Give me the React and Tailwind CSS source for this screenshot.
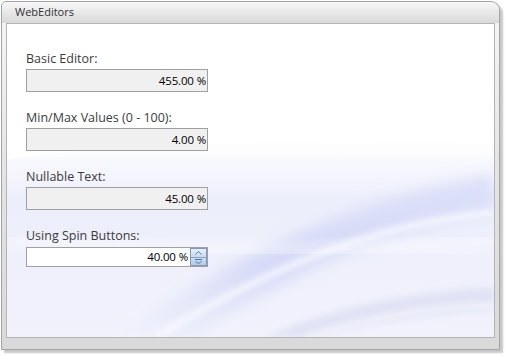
import React from 'react';

const font = { fontFamily: '"Segoe UI", "Open Sans", "Noto Sans", sans-serif' };

const fields = [
  { label: 'Basic Editor:', value: '455.00 %' },
  { label: 'Min/Max Values (0 - 100):', value: '4.00 %' },
  { label: 'Nullable Text:', value: '45.00 %' },
];

// lavender swoosh behind the editors
const Swoosh = () => (
  <svg className="absolute inset-0 w-full h-full" viewBox="0 0 488 312" preserveAspectRatio="none">
    <defs>
      <linearGradient id="tint" x1="0" y1="0" x2="0" y2="1">
        <stop offset="0" stopColor="#eceefb" stopOpacity="0" />
        <stop offset="0.3" stopColor="#eceefb" stopOpacity="1" />
        <stop offset="1" stopColor="#f1f2fc" />
      </linearGradient>
      <linearGradient id="band" x1="0" y1="1" x2="1" y2="0">
        <stop offset="0" stopColor="#dfe2f8" stopOpacity="0" />
        <stop offset="0.4" stopColor="#d6daf7" />
        <stop offset="1" stopColor="#dde0f8" />
      </linearGradient>
      <filter id="soft" x="-20%" y="-20%" width="140%" height="140%">
        <feGaussianBlur stdDeviation="7" />
      </filter>
      <filter id="soft2" x="-20%" y="-20%" width="140%" height="140%">
        <feGaussianBlur stdDeviation="3" />
      </filter>
    </defs>
    <path d="M0 135 C120 118 300 112 488 118 L488 312 L0 312 Z" fill="url(#tint)" />
    <path d="M0 128 C150 122 320 126 488 130" stroke="#ffffff" strokeWidth="8" strokeOpacity="0.8" fill="none" filter="url(#soft)" />
    <path d="M110 312 C220 235 340 175 488 150 L488 190 C370 205 270 255 190 312 Z" fill="url(#band)" filter="url(#soft)" />
    <path d="M150 312 C250 250 360 200 488 188" stroke="#f7f8fe" strokeWidth="6" fill="none" filter="url(#soft2)" />
    <path d="M0 215 C140 225 300 235 488 215" stroke="#ffffff" strokeWidth="10" strokeOpacity="0.55" fill="none" filter="url(#soft)" />
    <path d="M260 312 C330 280 410 268 488 262 L488 285 C420 290 350 300 310 312 Z" fill="#e1e3f5" filter="url(#soft2)" />
    <path d="M300 312 C370 290 430 282 488 280" stroke="#f8f8fd" strokeWidth="4" fill="none" filter="url(#soft2)" />
  </svg>
);

const Field = ({ label, value }) => (
  <div className="flex flex-col">
    <span className="text-[12.5px] leading-[16px] text-[#3b3b3b]">{label}</span>
    <div className="mt-[2px] w-[182px] h-[23px] border border-[#a0a0a0] bg-[#f0f0f0] flex items-center justify-end pr-[1px] text-[11.5px] tracking-[-0.15px] text-black whitespace-pre">
      {value}
    </div>
  </div>
);

const SpinField = ({ label, value }) => (
  <div className="flex flex-col">
    <span className="text-[12.5px] leading-[16px] text-[#3b3b3b]">{label}</span>
    <div className="mt-[3px] w-[182px] h-[20px] border border-[#a0a0a0] bg-white flex items-stretch">
      <div className="flex-1 flex items-center justify-end pr-[2px] text-[11.5px] tracking-[-0.15px] text-black whitespace-pre">{value}</div>
      <div className="w-[17px] flex flex-col border border-[#8399b6]">
        <div className="flex-1 flex items-center justify-center bg-gradient-to-b from-[#e6f0fb] to-[#c6dbf3] border-b border-[#8fa4bf]">
          <svg width="7" height="4" viewBox="0 0 7 4"><path d="M0.5 3.5 L3.5 0.5 L6.5 3.5" stroke="#5d7591" fill="none" /></svg>
        </div>
        <div className="flex-1 flex flex-col items-center justify-center gap-[1px] bg-gradient-to-b from-[#c8dcf3] to-[#b3cdee]">
          <div className="w-[7px] h-[1px] bg-[#5d7591]" />
          <svg width="7" height="3" viewBox="0 0 7 3"><path d="M0.5 0.5 L3.5 2.5 L6.5 0.5" stroke="#5d7591" fill="none" /></svg>
        </div>
      </div>
    </div>
  </div>
);

export default function App() {
  return (
    <div className="w-[506px] h-[356px] bg-white" style={font}>
      <div className="ml-[1px] mt-[1px] w-[499px] h-[349px] flex flex-col rounded-tl-[5px] rounded-tr-[9px] border border-[#a3a3a3] bg-gradient-to-b from-[#f6f6f6] via-[#e4e4e4] to-[#d9d9d9] shadow-[3px_3px_2px_rgba(0,0,0,0.22)]">
        <div className="h-[21px] flex items-center pl-[13px] text-[11px] text-[#2f2f2f] bg-gradient-to-b from-[#f7f7f7] to-[#d9d9d9] rounded-tl-[5px] rounded-tr-[9px]">
          WebEditors
        </div>
        <div className="relative mx-[4px] mb-[11px] flex-1 border border-[#b4b4b4] bg-white overflow-hidden">
          <Swoosh />
          <div className="relative flex flex-col gap-[18px] pl-[19px] pt-[27px]">
            {fields.map((f) => (
              <Field key={f.label} label={f.label} value={f.value} />
            ))}
            <SpinField label="Using Spin Buttons:" value="40.00 %" />
          </div>
        </div>
      </div>
    </div>
  );
}
